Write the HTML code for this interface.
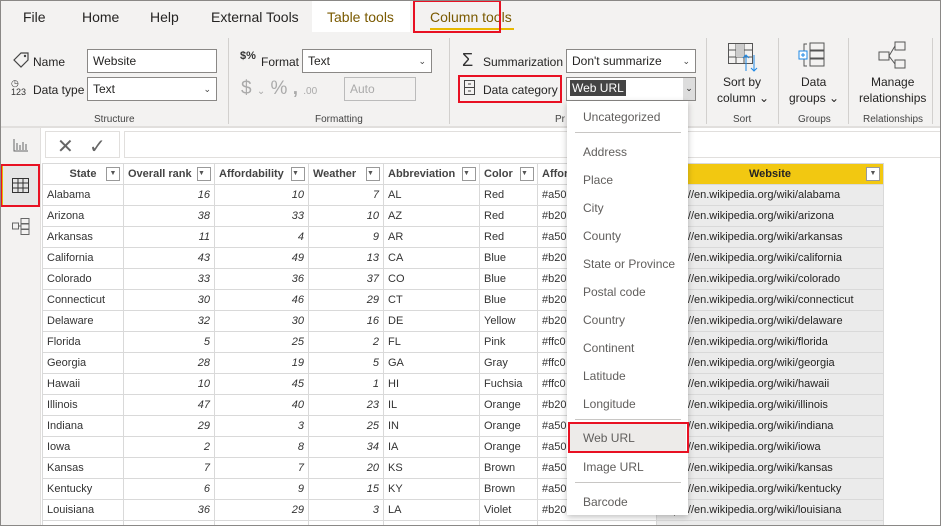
<!DOCTYPE html>
<html><head><meta charset="utf-8"><style>
*{box-sizing:border-box;margin:0;padding:0}
html{width:941px;height:526px;overflow:hidden}
body{width:941px;height:526px;overflow:hidden;font-family:"Liberation Sans",sans-serif;background:#fff;position:relative;color:#252423}
.a{position:absolute}
.frame{position:absolute;left:0;top:0;width:941px;height:526px;border:1px solid #8a8886;pointer-events:none;z-index:50}
.tab{position:absolute;top:9px;font-size:14px;color:#252423}
.inp{position:absolute;background:#fff;border:1px solid #8a8886;font-size:12px;padding:3px 5px;height:24px;line-height:16px}
.chev{position:absolute;right:5px;top:3px;font-size:9px;color:#444}
.lbl{position:absolute;font-size:12px;color:#252423}
.grp{position:absolute;top:114px;font-size:10px;color:#444}
.sep{position:absolute;top:38px;width:1px;height:86px;background:#d2d0ce}
.tw{position:absolute;left:42px;top:163px;width:899px;height:363px;overflow:hidden}
table{border-collapse:collapse;font-size:11px;table-layout:fixed}
td,th{border:1px solid #d9d9d9;height:21px;padding:0 4px;white-space:nowrap;overflow:hidden;color:#333}
th{font-weight:bold;color:#444;text-align:center;position:relative;background:#fff}
th span.f{position:absolute;right:3px;top:3px;width:14px;height:14px;border:1px solid #999;background:#fff;font-size:7px;line-height:12px;color:#555}
td.n{text-align:right;font-style:italic}
td.w{background:#ebebeb;color:#252423}
th.w{background:#f2c811;color:#252423}
.dd{position:absolute;left:567px;top:101px;width:121px;height:414px;background:#fff;box-shadow:0 2px 6px rgba(0,0,0,.25);z-index:10;font-size:12px;color:#605e5c}
.dd div{position:absolute;left:16px}
.dd hr{position:absolute;left:8px;width:106px;border:0;border-top:1px solid #c8c6c4}
.red{position:absolute;border:2px solid #e81123;z-index:20}
</style></head><body>
<div class="a" style="left:0;top:0;width:941px;height:128px;background:#f3f2f1"></div>
<div class="a" style="left:312px;top:0;width:98px;height:32px;background:#fff"></div>
<div class="tab" style="left:23px">File</div>
<div class="tab" style="left:82px">Home</div>
<div class="tab" style="left:150px">Help</div>
<div class="tab" style="left:211px">External Tools</div>
<div class="tab" style="left:327px;color:#7a5a00">Table tools</div>
<div class="tab" style="left:430px;color:#7a5a00">Column tools</div>
<div class="a" style="left:430px;top:28px;width:84px;height:2px;background:#e8b800"></div>
<div class="red" style="left:413px;top:0;width:88px;height:33px"></div>
<svg class="a" style="left:12px;top:52px" width="18" height="16" viewBox="0 0 18 16"><path d="M2 8 L9 1 L16 1 L16 8 L9 15 Z" fill="none" stroke="#444" stroke-width="1.2"/><circle cx="13" cy="4" r="1.2" fill="#444"/></svg>
<div class="lbl" style="left:33px;top:55px">Name</div>
<div class="inp" style="left:87px;top:49px;width:130px">Website</div>
<div class="a" style="left:11px;top:79px;font-size:9px;color:#333;line-height:9px">&#9719;<br>123</div>
<div class="lbl" style="left:33px;top:83px">Data type</div>
<div class="inp" style="left:87px;top:77px;width:130px">Text<span class="chev">&#8964;</span></div>
<div class="grp" style="left:94px">Structure</div>
<div class="sep" style="left:228px"></div>
<div class="a" style="left:240px;top:50px;font-size:11px;font-weight:bold;color:#333">$%</div>
<div class="lbl" style="left:261px;top:55px">Format</div>
<div class="inp" style="left:302px;top:49px;width:130px">Text<span class="chev">&#8964;</span></div>
<div class="a" style="left:241px;top:78px;font-size:19px;color:#aaa">$ <span style="font-size:10px">&#8964;</span> % <b>,</b> <span style="font-size:10px">.00</span></div>
<div class="inp" style="left:344px;top:77px;width:72px;color:#aaa;border-color:#bbb;background:#f3f2f1">Auto</div>
<div class="grp" style="left:315px">Formatting</div>
<div class="sep" style="left:449px"></div>
<div class="a" style="left:462px;top:50px;font-size:18px;color:#333">&Sigma;</div>
<div class="lbl" style="left:483px;top:55px">Summarization</div>
<div class="inp" style="left:566px;top:49px;width:130px">Don't summarize<span class="chev">&#8964;</span></div>
<svg class="a" style="left:464px;top:80px" width="12" height="16"><rect x="0.5" y="0.5" width="10" height="14" fill="none" stroke="#444"/><line x1="1" y1="7.5" x2="10" y2="7.5" stroke="#444"/><line x1="4" y1="4" x2="7" y2="4" stroke="#444"/><line x1="4" y1="11" x2="7" y2="11" stroke="#444"/></svg>
<div class="lbl" style="left:483px;top:83px">Data category</div>
<div class="red" style="left:458px;top:75px;width:104px;height:28px"></div>
<div class="inp" style="left:566px;top:77px;width:130px;padding:2px 3px"><span style="background:#444;color:#fff;padding:1px 2px">Web URL</span><span style="position:absolute;right:0;top:0;width:12px;height:22px;background:#ddd;font-size:9px;text-align:center;line-height:20px">&#8964;</span></div>
<div class="grp" style="left:555px">Pr</div>
<div class="sep" style="left:706px"></div>
<svg class="a" style="left:728px;top:43px" width="32" height="30"><g fill="none" stroke="#555"><rect x="0.5" y="0.5" width="24" height="20"/><line x1="0" y1="7" x2="25" y2="7"/><line x1="0" y1="14" x2="25" y2="14"/><line x1="8" y1="0" x2="8" y2="21"/><line x1="16" y1="0" x2="16" y2="21"/></g><rect x="8" y="1" width="8" height="13" fill="#ccc"/><path d="M18 28V12M15 15l3-3 3 3M26 12v16M23 25l3 3 3-3" stroke="#1e88e5" fill="none"/></svg>
<div class="lbl" style="left:723px;top:75px">Sort by</div>
<div class="lbl" style="left:717px;top:91px">column &#8964;</div>
<div class="grp" style="left:733px">Sort</div>
<div class="sep" style="left:778px"></div>
<svg class="a" style="left:798px;top:42px" width="30" height="26"><g fill="none" stroke="#555"><path d="M9 2H6v22h3"/><rect x="12" y="1" width="14" height="7"/><rect x="12" y="9" width="14" height="7"/><rect x="12" y="17" width="14" height="7"/></g><rect x="1" y="9" width="8" height="8" fill="#fff" stroke="#1e88e5"/><path d="M3 13h4M5 11v4" stroke="#1e88e5"/></svg>
<div class="lbl" style="left:801px;top:75px">Data</div>
<div class="lbl" style="left:789px;top:91px">groups &#8964;</div>
<div class="grp" style="left:798px">Groups</div>
<div class="sep" style="left:848px"></div>
<svg class="a" style="left:878px;top:41px" width="30" height="28"><g fill="none" stroke="#555"><rect x="1" y="11" width="10" height="8"/><rect x="17" y="1" width="10" height="8"/><rect x="17" y="19" width="10" height="8"/><path d="M11 15l6-10M11 15l6 8"/></g></svg>
<div class="lbl" style="left:871px;top:75px">Manage</div>
<div class="lbl" style="left:859px;top:91px">relationships</div>
<div class="grp" style="left:863px">Relationships</div>
<div class="sep" style="left:932px"></div>
<div class="a" style="left:0;top:126px;width:941px;height:2px;background:#e1dfdd"></div>
<div class="a" style="left:0;top:128px;width:41px;height:398px;background:#f3f2f1;border-right:1px solid #e1dfdd"></div>
<svg class="a" style="left:13px;top:139px" width="15" height="13"><path d="M1 0v12h14M4 4v7M7 6v5M10 3v8M13 5v6" stroke="#666" fill="none"/></svg>
<div class="a" style="left:1px;top:165px;width:37px;height:40px;background:#e6e6e6"></div>
<div class="a" style="left:1px;top:165px;width:2px;height:40px;background:#e8b800"></div>
<svg class="a" style="left:12px;top:178px" width="17" height="15"><g fill="none" stroke="#333"><rect x="0.5" y="0.5" width="16" height="14"/><path d="M0 5h17M0 10h17M6 0v15M11 0v15"/></g></svg>
<div class="red" style="left:0;top:164px;width:40px;height:43px"></div>
<svg class="a" style="left:12px;top:218px" width="18" height="17"><g fill="none" stroke="#666"><rect x="0.5" y="5" width="6" height="6"/><rect x="9" y="0.5" width="8" height="5"/><rect x="9" y="6" width="8" height="5"/><rect x="9" y="11.5" width="8" height="5"/><path d="M6 8h3"/></g></svg>
<div class="a" style="left:45px;top:131px;width:75px;height:27px;border:1px solid #e1dfdd;background:#fff"></div>
<div class="a" style="left:57px;top:134px;font-size:20px;color:#666;font-weight:200">&#10005;</div>
<div class="a" style="left:89px;top:134px;font-size:20px;color:#666">&#10003;</div>
<div class="a" style="left:124px;top:131px;width:817px;height:27px;border:1px solid #e1dfdd;background:#fff"></div>
<div class="tw">
<table>
<colgroup><col style="width:81px"><col style="width:91px"><col style="width:94px"><col style="width:75px"><col style="width:96px"><col style="width:58px"><col style="width:119px"><col style="width:227px"></colgroup>
<tr><th>State<span class="f">&#9660;</span></th><th style="text-align:left">Overall rank<span class="f">&#9660;</span></th><th style="text-align:left">Affordability<span class="f">&#9660;</span></th><th style="text-align:left">Weather<span class="f">&#9660;</span></th><th style="text-align:left">Abbreviation<span class="f">&#9660;</span></th><th style="text-align:left">Color<span class="f">&#9660;</span></th><th style="text-align:left">Affordability</th><th class="w">Website<span class="f">&#9660;</span></th></tr>
<tr><td>Alabama</td><td class="n">16</td><td class="n">10</td><td class="n">7</td><td>AL</td><td>Red</td><td>#a50</td><td class="w">https://en.wikipedia.org/wiki/alabama</td></tr>
<tr><td>Arizona</td><td class="n">38</td><td class="n">33</td><td class="n">10</td><td>AZ</td><td>Red</td><td>#b20</td><td class="w">https://en.wikipedia.org/wiki/arizona</td></tr>
<tr><td>Arkansas</td><td class="n">11</td><td class="n">4</td><td class="n">9</td><td>AR</td><td>Red</td><td>#a50</td><td class="w">https://en.wikipedia.org/wiki/arkansas</td></tr>
<tr><td>California</td><td class="n">43</td><td class="n">49</td><td class="n">13</td><td>CA</td><td>Blue</td><td>#b20</td><td class="w">https://en.wikipedia.org/wiki/california</td></tr>
<tr><td>Colorado</td><td class="n">33</td><td class="n">36</td><td class="n">37</td><td>CO</td><td>Blue</td><td>#b20</td><td class="w">https://en.wikipedia.org/wiki/colorado</td></tr>
<tr><td>Connecticut</td><td class="n">30</td><td class="n">46</td><td class="n">29</td><td>CT</td><td>Blue</td><td>#b20</td><td class="w">https://en.wikipedia.org/wiki/connecticut</td></tr>
<tr><td>Delaware</td><td class="n">32</td><td class="n">30</td><td class="n">16</td><td>DE</td><td>Yellow</td><td>#b20</td><td class="w">https://en.wikipedia.org/wiki/delaware</td></tr>
<tr><td>Florida</td><td class="n">5</td><td class="n">25</td><td class="n">2</td><td>FL</td><td>Pink</td><td>#ffc0</td><td class="w">https://en.wikipedia.org/wiki/florida</td></tr>
<tr><td>Georgia</td><td class="n">28</td><td class="n">19</td><td class="n">5</td><td>GA</td><td>Gray</td><td>#ffc0</td><td class="w">https://en.wikipedia.org/wiki/georgia</td></tr>
<tr><td>Hawaii</td><td class="n">10</td><td class="n">45</td><td class="n">1</td><td>HI</td><td>Fuchsia</td><td>#ffc0</td><td class="w">https://en.wikipedia.org/wiki/hawaii</td></tr>
<tr><td>Illinois</td><td class="n">47</td><td class="n">40</td><td class="n">23</td><td>IL</td><td>Orange</td><td>#b20</td><td class="w">https://en.wikipedia.org/wiki/illinois</td></tr>
<tr><td>Indiana</td><td class="n">29</td><td class="n">3</td><td class="n">25</td><td>IN</td><td>Orange</td><td>#a50</td><td class="w">https://en.wikipedia.org/wiki/indiana</td></tr>
<tr><td>Iowa</td><td class="n">2</td><td class="n">8</td><td class="n">34</td><td>IA</td><td>Orange</td><td>#a50</td><td class="w">https://en.wikipedia.org/wiki/iowa</td></tr>
<tr><td>Kansas</td><td class="n">7</td><td class="n">7</td><td class="n">20</td><td>KS</td><td>Brown</td><td>#a50</td><td class="w">https://en.wikipedia.org/wiki/kansas</td></tr>
<tr><td>Kentucky</td><td class="n">6</td><td class="n">9</td><td class="n">15</td><td>KY</td><td>Brown</td><td>#a50</td><td class="w">https://en.wikipedia.org/wiki/kentucky</td></tr>
<tr><td>Louisiana</td><td class="n">36</td><td class="n">29</td><td class="n">3</td><td>LA</td><td>Violet</td><td>#b20</td><td class="w">https://en.wikipedia.org/wiki/louisiana</td></tr>
<tr><td></td><td></td><td></td><td></td><td></td><td></td><td></td><td class="w"></td></tr>
</table>
</div>
<div class="dd">
<div style="top:9px">Uncategorized</div>
<hr style="top:31px">
<div style="top:44px">Address</div>
<div style="top:72px">Place</div>
<div style="top:100px">City</div>
<div style="top:128px">County</div>
<div style="top:156px">State or Province</div>
<div style="top:184px">Postal code</div>
<div style="top:212px">Country</div>
<div style="top:240px">Continent</div>
<div style="top:268px">Latitude</div>
<div style="top:296px">Longitude</div>
<hr style="top:318px">
<div style="left:2px;top:322px;width:117px;height:29px;background:#edebe9"></div>
<div style="top:330px">Web URL</div>
<div style="top:359px">Image URL</div>
<hr style="top:381px">
<div style="top:394px">Barcode</div>
</div>
<div class="red" style="left:568px;top:422px;width:121px;height:31px"></div>
<div class="frame"></div>
</body></html>
